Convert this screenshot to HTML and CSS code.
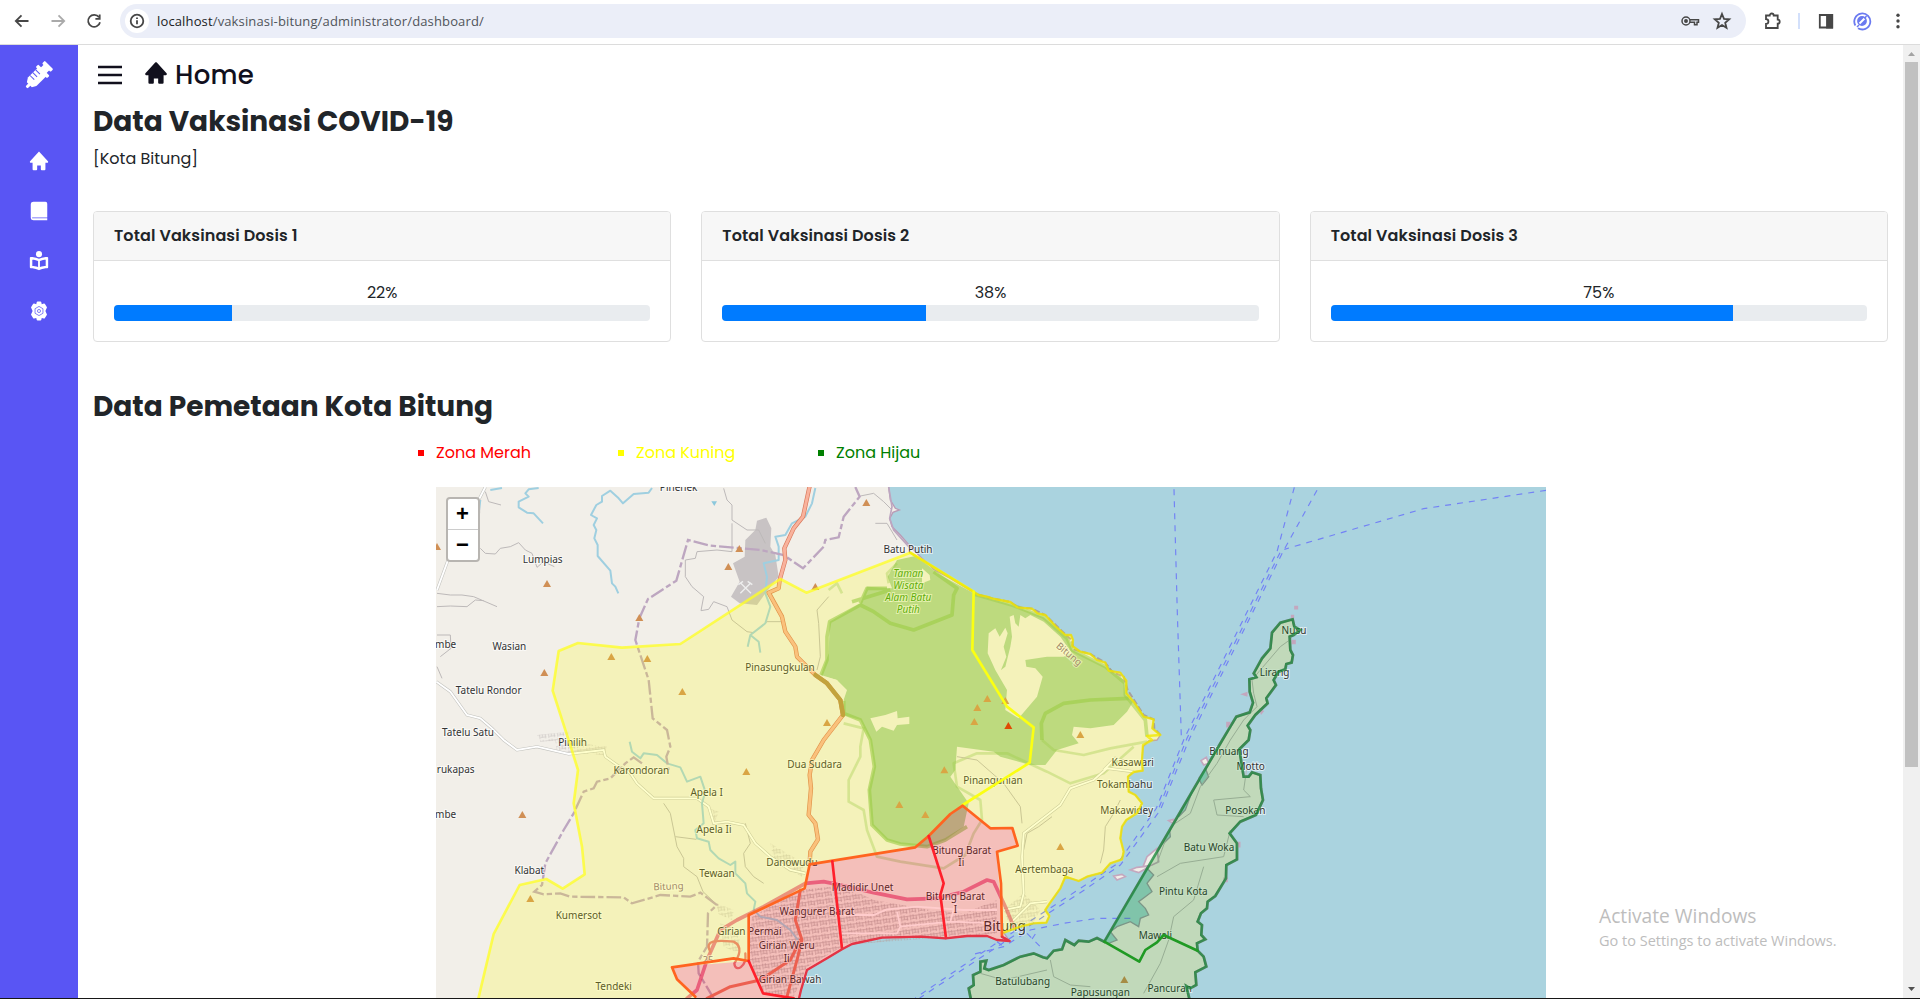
FILE: index.html
```html
<!DOCTYPE html>
<html lang="id">
<head>
<meta charset="utf-8">
<title>Dashboard Vaksinasi Bitung</title>
<link rel="stylesheet" href="styles.css">
</head>
<body>
<header class="toolbar">
  <nav class="nav-buttons">
    <svg width="20" height="20" viewBox="0 0 20 20" class="line"><path d="M16.5 10H4M9.5 4.3 3.8 10l5.7 5.7"/></svg>
    <svg width="20" height="20" viewBox="0 0 20 20" class="line faded"><path d="M3.500 10H16M10.500 4.300 16.200 10l-5.700 5.700"/></svg>
    <svg width="20" height="20" viewBox="0 0 20 20" class="line"><path d="M15 6.300A6 6 0 1 0 16 11.200M15.700 3.500v4.300h-4.300"/></svg>
  </nav>
  <div class="address">
    <span class="site-info"><svg width="16" height="16" viewBox="0 0 16 16" class="line"><circle cx="8" cy="8" r="6.300"/><path d="M8 7.200v4M8 4.500v1.500"/></svg></span>
    <span class="url"><b>localhost</b>/vaksinasi-bitung/administrator/dashboard/</span>
    <svg width="20" height="20" viewBox="0 0 20 20" class="line key"><circle cx="6" cy="10" r="4"/><circle cx="6" cy="10" r="1.200" fill="#474747"/><path d="M10 8.800h8.500v2.400H17v2.500h-2.500v-2.500H10"/></svg>
    <svg width="20" height="20" viewBox="0 0 20 20" class="line"><path d="m10 3 2 4.900 5.200.4-4 3.400 1.300 5.100L10 14l-4.500 2.800 1.300-5.100-4-3.400 5.200-.4z"/></svg>
  </div>
  <div class="extensions">
    <svg width="20" height="20" viewBox="0 0 20 20" class="line"><path d="M4 4.500h3.700a2 2 0 0 1 4 0h4v4.200a2 2 0 0 1 0 4V17H4v-4a2.300 2.300 0 0 0 0-4.800z"/></svg>
    <span class="divider"></span>
    <svg width="20" height="20" viewBox="0 0 20 20" class="line"><path d="M3.800 4h12.400v12.500H3.800z"/><path d="M11 4h5.200v12.500H11z" fill="#474747"/></svg>
    <svg width="20" height="20" viewBox="0 0 20 20" class="line profile"><path d="M3.400 14.500A8 8 0 1 1 6 17.200"/><circle cx="10" cy="10" r="4" fill="#6b7af0"/><path d="m7.500 12.500 5-5" stroke="#fff" stroke-width="2"/><path d="m5 16 2-2M12.500 7.500l2-2.500" stroke-width="1.500"/></svg>
    <svg width="20" height="20" viewBox="0 0 20 20" fill="#474747"><circle cx="10" cy="4.300" r="1.700"/><circle cx="10" cy="10" r="1.700"/><circle cx="10" cy="15.700" r="1.700"/></svg>
  </div>
</header>

<div class="page">
  <aside class="sidebar">
    <svg class="logo" width="30" height="30" viewBox="0 0 30 30"><g transform="translate(2.500 27.500) rotate(-45)" fill="#fff"><rect x="0" y="-1.500" width="5" height="3" rx="1"/><path d="M4-3.500 8-6h14v12H8L4 3.500z"/><rect x="21" y="-8" width="3.600" height="16" rx="1"/><rect x="24" y="-4" width="6" height="8"/><rect x="28" y="-6" width="3.800" height="12" rx="1"/><path d="M11-6v6M15-6v6M19-6v6" stroke="#5955f4" stroke-width="1"/></g></svg>
    <svg width="22" height="22" viewBox="0 0 24 24"><path d="m21.743 12.331-9-10c-.379-.422-1.107-.422-1.486 0l-9 10a.998.998 0 0 0-.17 1.076c.16.361.518.593.913.593h2v7a1 1 0 0 0 1 1h3a1 1 0 0 0 1-1v-4h4v4a1 1 0 0 0 1 1h3a1 1 0 0 0 1-1v-7h2a.998.998 0 0 0 .743-1.669z"/></svg>
    <svg width="22" height="22" viewBox="0 0 24 24"><path d="M6 2h13a2 2 0 0 1 2 2v15H4.500v1H21v2H6c-1.500 0-3-.8-3-3V5c0-2.200 1.500-3 3-3z"/></svg>
    <svg width="22" height="22" viewBox="0 0 24 24"><path fill-rule="evenodd" d="M21 7.500c-.202 0-4.850.029-9 2.008C7.850 7.529 3.202 7.500 3 7.500a1 1 0 0 0-1 1v10.383a1 1 0 0 0 1 1c.683 0 4.400.098 8.600 2.025a1 1 0 0 0 .8 0c4.200-1.927 7.900-2.025 8.600-2.025a1 1 0 0 0 1-1V8.500a1 1 0 0 0-1-1zM4.700 10.500c1.485.111 4.200.48 6.300 1.500v6.600c-2.500-.9-4.900-1.100-6.300-1.200zm14.600 6.900c-1.410.1-3.800.3-6.300 1.200V12c2.100-1.020 4.800-1.390 6.300-1.500z"/><circle cx="12" cy="4.500" r="3.300"/></svg>
    <svg width="22" height="22" viewBox="0 0 24 24"><path d="M9.500 2.500a1 1 0 0 1 1-.9h3a1 1 0 0 1 1 .9l.5 2 2.300-.6a1 1 0 0 1 1.200.5l2 3.200a1 1 0 0 1-.2 1.300L19 12l1.300 3.100a1 1 0 0 1 .2 1.300l-2 3.200a1 1 0 0 1-1.200.5l-2.300-.6-.5 2a1 1 0 0 1-1 .9h-3a1 1 0 0 1-1-.9l-.5-2-2.300.6a1 1 0 0 1-1.200-.5l-2-3.200a1 1 0 0 1 .2-1.300L5 12 3.700 8.900a1 1 0 0 1-.2-1.300l2-3.200a1 1 0 0 1 1.200-.5l2.300.6z"/><path d="m12 7 4.300 2.500v5L12 17l-4.300-2.500v-5z" fill="none" stroke="#5955f4" stroke-width=".8"/><circle cx="12" cy="12" r="1.700" fill="none" stroke="#5955f4" stroke-width=".8"/></svg>
  </aside>

  <main class="content">
    <div class="page-head">
      <svg width="24" height="20" viewBox="0 0 24 20"><path d="M0 2h24M0 10h24M0 18h24" stroke="#11101d" stroke-width="2.500"/></svg>
      <svg class="home-icon" width="26" height="26" viewBox="0 0 24 24" fill="#11101d"><path d="m21.743 12.331-9-10c-.379-.422-1.107-.422-1.486 0l-9 10a.998.998 0 0 0-.17 1.076c.16.361.518.593.913.593h2v7a1 1 0 0 0 1 1h3a1 1 0 0 0 1-1v-4h4v4a1 1 0 0 0 1 1h3a1 1 0 0 0 1-1v-7h2a.998.998 0 0 0 .743-1.669z"/></svg>
      <span class="page-title">Home</span>
    </div>
    <h1 class="section-title">Data Vaksinasi COVID-19</h1>
    <p class="subtitle">[Kota Bitung]</p>

    <section class="cards">
      <article class="card"><h2 class="card-header">Total Vaksinasi Dosis 1</h2><div class="card-body"><span>22%</span><div class="progress"><div class="bar" style="width:22%"></div></div></div></article>
      <article class="card"><h2 class="card-header">Total Vaksinasi Dosis 2</h2><div class="card-body"><span>38%</span><div class="progress"><div class="bar" style="width:38%"></div></div></div></article>
      <article class="card"><h2 class="card-header">Total Vaksinasi Dosis 3</h2><div class="card-body"><span>75%</span><div class="progress"><div class="bar" style="width:75%"></div></div></div></article>
    </section>

    <h1 class="section-title map-title">Data Pemetaan Kota Bitung</h1>
    <ul class="legend">
      <li class="red">Zona Merah</li>
      <li class="yellow">Zona Kuning</li>
      <li class="green">Zona Hijau</li>
    </ul>

    <div class="map">
      <svg class="map-canvas" width="1110" height="511" viewBox="17 21 3330 1533">
        <defs>
          <path id="peak" d="M-12 10 0-11 12 10z"/>
          <path id="mainland" d="M0 0H1375V21L1380 60 1395 85 1407 90 1388 97 1378 115 1385 140 1410 165 1445 205 1475 235 1510 268 1560 295 1630 338 1645 345 1670 350 1685 355 1740 366 1762 382 1805 386 1822 400 1845 405 1875 438 1905 465 1922 465 1928 480 1926 498 1950 515 1980 522 2000 540 2025 548 2035 572 2070 578 2088 602 2088 640 2110 665 2140 710 2170 718 2166 745 2190 765 2180 780 2155 783 2138 800 2135 840 2137 872 2110 876 2093 890 2095 935 2115 945 2135 970 2120 1000 2088 1020 2075 1040 2070 1075 2080 1115 2075 1138 2040 1150 2015 1178 1970 1190 1945 1203 1905 1190 1890 1225 1858 1270 1845 1290 1857 1308 1848 1328 1810 1330 1770 1340 1720 1358 1738 1383 1700 1380 1670 1368 1610 1368 1545 1375 1470 1370 1355 1373 1265 1392 1235 1408 1190 1435 1130 1470 1112 1530 1105 1560H0z"/>
          <path id="island" d="M2587 418 2550 428 2525 458 2520 505 2495 535 2470 580 2478 592 2457 598 2458 635 2468 668 2458 697 2418 710 2395 748 2376 780 2022 1385 2000 1374 1975 1385 1945 1382 1932 1395 1905 1380 1895 1408 1870 1412 1850 1435 1838 1432 1810 1420 1770 1430 1720 1455 1675 1470 1662 1465 1668 1442 1650 1445 1650 1475 1628 1485 1630 1515 1615 1525 1622 1560H2278L2268 1518 2280 1525 2298 1515 2295 1477 2328 1460 2320 1430 2302 1412 2300 1390 2325 1378 2313 1365 2315 1335 2302 1325 2312 1300 2330 1285 2332 1265 2355 1248 2387 1195 2388 1155 2420 1138 2420 1090 2398 1060 2430 1025 2477 1005 2498 960 2492 925 2490 885 2465 877 2455 890 2440 890 2427 808 2455 780 2460 750 2452 737 2475 705 2512 670 2508 655 2537 615 2530 600 2545 575 2565 568 2568 552 2584 548 2588 525 2580 510 2578 470 2590 465 2610 450 2592 440z"/>
          <pattern id="streets" width="27" height="21" patternUnits="userSpaceOnUse" patternTransform="rotate(-8)"><path d="M2 0v18M10 0v14M19 4v14M0 5h27M4 13h18" fill="none" stroke="#b0abab" stroke-width="2"/></pattern>
        </defs>

        <rect width="3400" height="1600" fill="#aad3df"/>
        <use href="#mainland" fill="#f2efe9" stroke="#b99bb5" stroke-width="4"/>
        <use href="#island" fill="#f2efe9" stroke="#b99bb5" stroke-width="8"/>
        <g fill="#f2efe9" stroke="#c4a7be" stroke-width="5">
          <path d="M2185 1145 2180 1105 2150 1130 2138 1160 2165 1155zM2120 1162 2100 1170 2125 1178 2160 1158zM2050 1188 2075 1183 2085 1190 2060 1200zM2312 842 2328 832 2335 850 2320 855zM2215 1022 2230 1018 2228 1030z"/>
          <path d="M2594 380h7v6h-7zM2584 407h5v6h-5zM2437 643l12-4v8zM2490 690l8 4-5 6zM2390 728h8v12h-8zM2586 482h8v8h-8zM2420 1088h8v12h-8zM2382 1195h8v9h-8z" fill="#c0a5bb"/>
        </g>
        <!-- tidal inlets behind the island's boundary line -->
        <path d="M2150 1165 2170 1185 2150 1210 2165 1235 2145 1250 2125 1265 2145 1285 2155 1305 2130 1315 2125 1340 2100 1325 2060 1340 2040 1355 2060 1380 2035 1390 2022 1385zM2285 935 2245 1010 2265 990zM2325 865 2335 890 2315 915 2305 895zM2218 1050 2200 1090 2220 1070z" fill="#a0d5d5" stroke="#9a9ba9" stroke-width="4"/>

        <!-- forest and reserve outlines -->
        <path d="M1455 228 1475 240 1520 280 1630 340 1745 375 1840 412 1910 470 1926 510 2025 560 2080 600 2085 645 2108 665 2090 695 2050 735 1980 745 1930 740 1925 765 1945 790 1880 810 1845 855 1800 855 1710 830 1690 815 1580 800 1575 870 1560 890 1615 970 1600 1040 1545 1080 1490 1100 1410 1092 1370 1080 1325 1035 1315 930 1332 860 1320 780 1290 720 1240 705 1242 662 1220 600 1172 585 1195 520 1198 425 1290 370 1310 320 1385 325 1372 290 1400 240z" fill="#add19e"/>
        <path d="M1675 460 1695 445 1708 470 1725 443 1732 460 1720 500 1728 530 1712 570 1725 560 1740 500 1745 470 1738 410 1750 405 1755 430 1765 440 1770 405 1785 415 1800 405 1840 425 1890 470 1925 520 1900 530 1850 530 1785 540 1788 560 1815 565 1837 590 1820 650 1765 715 1725 690 1730 630 1695 570 1672 520zM1320 715 1365 705 1400 693 1402 715 1437 710 1437 732 1400 735 1390 752 1355 740 1338 755zM1184 590 1220 600 1250 630 1240 660zM1475 265 1498 285 1500 300 1475 310z" fill="#f2efe9"/>
        <g fill="none" stroke="#83bf55" stroke-width="11" stroke-opacity=".6" stroke-linejoin="round">
          <path d="M1172 585 1190 540 1190 470 1198 425 1290 375 1330 395 1380 430 1450 450 1565 405 1570 345 1580 325 1510 275M1290 370 1310 325 1370 325M1265 365 1380 330M1240 662 1240 700 1290 720 1320 780 1332 860 1317 930 1325 1035 1370 1080 1410 1092 1490 1100 1545 1080 1610 1040M1835 780 1833 730 1845 700 1900 670 1980 660 2095 655"/>
          <path d="M1240 730 1300 745 1290 800 1290 830 1255 900 1255 965 1300 990 1310 1050 1340 1130 1410 1145 1540 1165 1605 1125 1630 1060 1655 1020 1650 960 1580 920 1570 850 1640 820 1730 820 1850 875 1920 910 2020 880 2110 800M1835 780 1870 810 1960 825 2040 805 2150 785M1400 250 1370 280 1375 310M1195 330 1220 310 1235 340" stroke-width="8" stroke-opacity=".35"/>
          <path d="M1630 342 1745 375 1840 412 1910 475 1926 510 2025 560 2085 610 2085 645 2145 720 2150 770" stroke-opacity=".5"/>
        </g>

        <!-- quarry and built-up areas -->
        <path d="M980 122 1008 113 1023 145 1020 200 1035 225 1045 290 1005 340 980 375 928 370 902 350 928 305 908 250 943 230 945 180 975 150z" fill="#c8c3c4"/>
        <path d="m930 340 32-32m-32 0 32 32m-38-26 14-10m14 0 14 10" stroke="#eee" stroke-width="4"/>
        <g fill="url(#streets)">
          <path d="M965 1310 1110 1230 1200 1220 1235 1400 1130 1460 1090 1550 1000 1540 955 1440zM1200 1200 1330 1260 1500 1290 1600 1300 1700 1260 1700 1360 1240 1395z"/>
          <path d="M1720 1290 1780 1240 1830 1290 1810 1325 1740 1340zM860 1270 910 1290 905 1320 860 1300zM1020 1090 1120 1150 1115 1190 1030 1140zM835 985 865 995 850 1035zM870 1330 930 1350 925 1420 880 1400zM320 765 415 755 410 780 330 785zM375 780 530 800 520 825 380 815z" opacity=".6"/>
        </g>

        <!-- minor roads -->
        <g fill="none" stroke="#bdb9b9" stroke-width="3" stroke-linejoin="round">
          <path d="M150 205 165 220 195 222 210 205 240 200 265 188 285 210 305 220 320 262 340 245 372 260M165 35 175 65 212 75M20 340 60 345 95 345 130 350 200 380M20 380 60 378 110 380 135 360 160 362M20 465 60 465 62 505 30 530M20 560 35 595"/>
          <path d="M905 215 860 210 800 215 795 235 765 240 765 290 785 320 820 350 812 392 835 388 850 365 890 380 905 420 950 455 970 458 1010 425 1060 425M880 25 890 60 905 75 905 120 950 150 985 150 1005 190M905 130 905 215M1290 48 1330 40 1360 65 1385 90M1335 130 1370 130 1400 180M1195 350 1160 390 1165 430 1170 530 1160 570"/>
          <path d="M700 970 720 1000 740 1100 760 1135 760 1160 800 1190 818 1235 850 1265M735 1070 798 1078M945 1030 960 1090 940 1120 945 1160 970 1190 1000 1210M1580 830 1640 840 1720 910 1770 980 1775 1030M1865 1010 1825 1040 1790 1060 1780 1110M2070 960 2050 1000 2025 1040 2020 1110 2010 1150"/>
          <path d="M2585 475 2550 500 2490 570 2465 600 2470 640 2480 680 2440 720 2400 780 2360 850 2310 920 2280 1000 2220 1040 2180 1150M2450 860 2440 930 2460 950 2350 960 2360 1005 2440 1010M2400 1050 2380 1130 2250 1150 2180 1190M2320 1160 2290 1260 2230 1310 2215 1380 2190 1450 2140 1540M1860 1440 1870 1490 1920 1515 1980 1520M1650 1480 1720 1500 1850 1470"/>
        </g>
        <path d="M165 21 145 60 145 100M55 235 20 330M18 605 60 635 110 705 150 715 185 745 220 780 260 810 320 800 415 822 520 810 525 830 560 855 600 880 620 910 670 955 800 955 835 980 850 1030 890 1025 940 1035 975 1090 1020 1130 1080 1170 1125 1180M2110 875 2030 865 1990 900 1920 925 1890 975 1780 1060 1775 1130 1780 1240 1770 1280 1720 1290M2020 870 2055 835 2100 850M1730 1340 1800 1270 1850 1265" fill="none" stroke="#c3c3bf" stroke-width="9"/>
        <path d="M165 21 145 60 145 100M55 235 20 330M18 605 60 635 110 705 150 715 185 745 220 780 260 810 320 800 415 822 520 810 525 830 560 855 600 880 620 910 670 955 800 955 835 980 850 1030 890 1025 940 1035 975 1090 1020 1130 1080 1170 1125 1180M2110 875 2030 865 1990 900 1920 925 1890 975 1780 1060 1775 1130 1780 1240 1770 1280 1720 1290M2020 870 2055 835 2100 850M1730 1340 1800 1270 1850 1265M1240 1305 1330 1305 1370 1288 1460 1280 1600 1290 1700 1290M1230 1360 1400 1360 1410 1340 1560 1325 1700 1330M1560 1325 1580 1250M1400 1295 1410 1340" fill="none" stroke="#fff" stroke-width="5.500"/>

        <!-- rivers -->
        <g fill="none" stroke="#9fcfe0" stroke-width="6" stroke-linejoin="round">
          <path d="M325 24 295 28 285 40 295 50 265 65 265 82 290 98 310 100 338 130M665 24 655 38 610 42 578 70 565 55 540 32 515 48 515 65 498 75 482 105 500 115 490 135 498 150 492 175 502 195 502 228 540 272 545 310 555 320 564 340M1155 24 1145 70 1125 110 1085 130 1065 165 1035 170 1045 200 1045 240 1000 250 1010 290 1005 340 1020 380 1005 430 960 465 952 500M960 465 985 485 990 518M150 60 145 100 145 170M215 24 180 30"/>
          <path d="M598 785 605 815 630 835 640 820 680 825 710 850 750 862 770 905 810 890 825 935 815 970 820 1030 795 1050 800 1075 835 1085 840 1110 865 1135 900 1155 915 1145 915 1180 945 1210 950 1240 975 1265 970 1290 990 1310 1040 1320 1080 1350 1110 1390"/>
        </g>
        <path d="M843 64h17l-8 14z" fill="#8cc8dc"/>

        <!-- regency boundaries -->
        <g fill="none" stroke="#bda6c0" stroke-width="7" stroke-dasharray="44 9 16 9">
          <path d="M1275 21 1288 50 1240 110 1225 172 1185 180 1180 200 1118 265 1060 225 990 210 840 197 773 180 738 302 653 357 627 415 615 480 655 600 667 715 710 750 720 800 708 830 715 870M635 850 610 832 585 850 540 895 500 905 490 925 460 935 430 1000 400 1050 345 1150 335 1215 312 1235 340 1243 390 1240 420 1250 580 1252 605 1270 690 1245 780 1250 810 1238 860 1275 833 1300 830 1400 803 1445 805 1480 850 1555"/>
          <path d="M1375 21 1385 80 1378 115 1390 150 1440 205" stroke-dasharray="none" stroke-width="5"/>
        </g>
        <g fill="none" stroke="#a58f87" stroke-width="6" stroke-opacity=".75"><path d="M1645 345 1685 355 1740 366 1762 382 1805 386 1845 405 1905 463 1924 480 1930 508 1980 522 2025 548 2045 575 2080 590 2092 630 2140 705 2170 718 2172 745 2190 765" stroke-dasharray="18 7"/></g>

        <!-- main roads -->
        <g fill="none" stroke-linejoin="round" stroke-linecap="round">
          <path d="M1138 18 1118 110 1090 145 1062 205 1065 240 1048 300 1045 325 1015 338 1055 410 1065 455 1095 500 1100 530 1155 585 1190 610 1230 660 1238 705 1180 780 1145 840 1138 885 1142 925 1135 1005 1155 1030 1163 1078 1140 1115 1138 1150" stroke="#d9795c" stroke-width="13"/>
          <path d="M1138 18 1118 110 1090 145 1062 205 1065 240 1048 300 1045 325 1015 338 1055 410 1065 455 1095 500 1100 530 1155 585 1190 610 1230 660 1238 705 1180 780 1145 840 1138 885 1142 925 1135 1005 1155 1030 1163 1078 1140 1115 1138 1150" stroke="#f9b29c" stroke-width="9"/>
          <path d="M1155 585 1190 610 1230 660 1238 705" stroke="#b38c4c" stroke-width="13"/>
          <path d="M770 1555 800 1530 830 1440 870 1350 920 1320 1000 1280 1125 1210 1180 1205 1230 1215 1330 1238 1430 1258 1520 1255 1600 1235 1670 1200 1690 1205 1725 1280 1750 1340" stroke="#dc2a67" stroke-width="11" stroke-opacity=".6"/>
          <path d="M840 1415C820 1380 860 1380 910 1385 940 1400 925 1430 912 1450 915 1480 950 1460 945 1420" stroke="#e5757b" stroke-width="7"/>
          <path d="M1110 1230 1095 1320 1115 1380 1100 1440 1070 1550M830 1555 900 1520 990 1500 1080 1440 1110 1380" stroke="#e87965" stroke-width="9"/>
        </g>

        <!-- ferry routes -->
        <g fill="none" stroke="#7382f5" stroke-width="3.500" stroke-dasharray="18 18">
          <path d="M2231 28 2241 400 2253 770M3347 31 2980 86 2562 208M2592 22 2540 215 2262 775 2178 985 2062 1150 1955 1222 1700 1388 1455 1554M2660 31 2558 215 2278 775 2190 990 2070 1155 1965 1228 1710 1394 1468 1554"/>
          <path d="M2549 218 2270 775 2184 988"/>
          <path d="M2100 1315 2000 1315 1900 1330 1800 1350 1720 1400 1620 1425M1790 1360 1840 1410M1815 1362 1800 1385M1700 1385 1720 1400"/>
        </g>

        <g class="labels">
          <text x="745" y="32">Pinenek</text><text x="337" y="248">Lumpias</text><text x="237" y="510">Wasian</text><text x="46" y="504">mbe</text><text x="175" y="642">Tatelu Rondor</text><text x="113" y="769">Tatelu Satu</text><text x="427" y="798">Pinilih</text><text x="76" y="880">rukapas</text><text x="46" y="1014">mbe</text><text x="1049" y="572">Pinasungkulan</text><text x="1433" y="218">Batu Putih</text>
          <text x="633" y="883">Karondoran</text><text x="829" y="949">Apela I</text><text x="851" y="1058">Apela Ii</text><text x="1153" y="865">Dua Sudara</text><text x="297" y="1181">Klabat</text><text x="860" y="1192">Tewaan</text><text x="1085" y="1158">Danowudu</text><text x="445" y="1318">Kumersot</text><text x="957" y="1364">Girian Permai</text><text x="1069" y="1408">Girian Weru</text><text x="1069" y="1446">Ii</text><text x="1079" y="1509">Girian Bawah</text><text x="550" y="1529">Tendeki</text><text x="1160" y="1304">Wangurer Barat</text><text x="1297" y="1234">Madidir Unet</text><text x="1594" y="1121">Bitung Barat</text><text x="1593" y="1159">Ii</text><text x="1575" y="1260">Bitung Barat</text><text x="1575" y="1298">I</text><text x="1723" y="1354" class="city">Bitung</text><text x="1842" y="1180">Aertembaga</text><text x="1688" y="912">Pinangunian</text><text x="2107" y="857">Kasawari</text><text x="2083" y="923">Tokambahu</text><text x="2089" y="1002">Makawidey</text>
          <text x="2591" y="463">Nusu</text><text x="2533" y="588">Lirang</text><text x="2396" y="825">Binuang</text><text x="2461" y="869">Motto</text><text x="2445" y="1002">Posokan</text><text x="2336" y="1114">Batu Woka</text><text x="2259" y="1246">Pintu Kota</text><text x="2175" y="1378">Mawali</text><text x="2218" y="1535">Pancuran</text><text x="2010" y="1547">Papusungan</text><text x="1777" y="1516">Batulubang</text>
          <g class="park"><text x="1434" y="291">Taman</text><text x="1434" y="327">Wisata</text><text x="1434" y="363">Alam Batu</text><text x="1434" y="399">Putih</text></g>
          <g class="district"><text x="715" y="1229" transform="rotate(-2 715 1229)">Bitung</text><text transform="translate(1910 530) rotate(40)">Bitung</text><text x="833" y="1450">25</text></g>
        </g>
        <g fill="#d08f55"><use href="#peak" x="20" y="200"/><use href="#peak" x="350" y="311"/><use href="#peak" x="894" y="260"/><use href="#peak" x="927" y="206"/><use href="#peak" x="627" y="413"/><use href="#peak" x="342" y="578"/><use href="#peak" x="276" y="1004"/><use href="#peak" x="1308" y="68"/><use href="#peak" x="1155" y="320"/><use href="#peak" x="543" y="530"/><use href="#peak" x="651" y="536"/><use href="#peak" x="756" y="635"/><use href="#peak" x="948" y="875"/><use href="#peak" x="300" y="1256"/><use href="#peak" x="1190" y="728"/><use href="#peak" x="1671" y="656"/><use href="#peak" x="1725" y="662"/><use href="#peak" x="1641" y="683"/><use href="#peak" x="1632" y="725"/><use href="#peak" x="1950" y="764"/><use href="#peak" x="1542" y="870"/><use href="#peak" x="1407" y="974"/><use href="#peak" x="1485" y="1004"/><use href="#peak" x="1890" y="1100"/><use href="#peak" x="2082" y="1499"/></g>
        <use href="#peak" x="1734" y="737" fill="#d81e05"/>

        <!-- zone overlays -->
        <path fill="#ff0" fill-opacity=".2" d="M1050 297 750 492 575 503 443 489 385 513 367 632 418 790 443 870 430 970 455 1100 463 1183 397 1226 348 1197 268 1215 190 1362 143 1560H800L740 1498 725 1462 955 1443V1305L1123 1225 1138 1153 1455 1102 1495 1068 1560 1002 1597 977 1680 1045 1746 1044 1762 1097 1700 1115 1715 1358 1770 1340 1810 1330 1848 1328 1857 1308 1845 1290 1858 1270 1890 1225 1905 1190 1945 1203 1970 1190 2015 1178 2040 1150 2075 1138 2080 1115 2070 1075 2075 1040 2088 1020 2120 1000 2135 970 2115 945 2095 935 2093 890 2110 876 2137 872 2135 840 2138 800 2180 780 2190 765 2166 745 2170 718 2140 710 2110 665 2088 640 2088 602 2070 578 2035 572 2025 548 2000 540 1980 522 1950 515 1926 498 1928 480 1922 465 1905 465 1875 438 1845 405 1822 400 1805 386 1762 382 1740 366 1685 355 1645 345 1630 335 1440 218 1128 338z"/>
        <path fill="red" fill-opacity=".2" d="M800 1560 740 1498 725 1462 955 1443V1305L1123 1225 1138 1153 1455 1102 1495 1068 1560 1002 1597 977 1680 1045 1746 1044 1762 1097 1700 1115 1715 1358 1738 1383 1700 1380 1670 1368 1545 1375 1470 1370 1355 1373 1265 1392 1235 1408 1130 1470 1105 1560z"/>
        <use href="#island" fill="green" fill-opacity=".2" stroke="#138535" stroke-opacity=".75" stroke-width="8"/>
        <g fill="none" stroke-width="8" stroke-linejoin="round" stroke-linecap="round">
          <path stroke="#ffff20" stroke-opacity=".75" d="M143 1560 190 1362 268 1215 348 1197 397 1226 463 1183 455 1100 430 970 443 870 418 790 367 632 385 513 443 489 575 503 750 492 1050 297 1128 338 1440 218 1630 335"/>
          <path stroke="#f1e800" stroke-opacity=".8" stroke-width="7" d="M1440 218 1630 335 1645 345 1670 350 1685 355 1740 366 1762 382 1805 386 1822 400 1845 405 1875 438 1905 465 1922 465 1928 480 1926 498 1950 515 1980 522 2000 540 2025 548 2035 572 2070 578 2088 602 2088 640 2110 665 2140 710 2170 718 2166 745 2190 765 2150 768 2165 780 2138 795 2135 840 2137 872 2110 876 2093 890 2095 935 2115 945 2135 970 2120 1000 2088 1020 2075 1040 2070 1075 2080 1115 2075 1138 2040 1150 2015 1178 1970 1190 1945 1203 1905 1190 1890 1225 1858 1270 1845 1290 1857 1308 1848 1328 1810 1330 1770 1340 1720 1358"/>
          <path stroke="#fbff12" d="M1630 335 1626 510 1730 680 1810 742 1798 848 1597 975"/>
          <path stroke="#ff6420" d="M795 1550 740 1498 725 1462 910 1435 955 1443V1305L1123 1225 1138 1153 1455 1102 1495 1068 1560 1002 1597 977 1680 1045 1746 1044 1762 1097 1700 1115 1712 1210 1715 1370"/>
          <path stroke="#ff202c" d="M1206 1144 1235 1405M1495 1068 1540 1210 1530 1245 1547 1374M955 1443 998 1540 1090 1555"/>
          <path stroke="#e43445" stroke-width="7" d="M1715 1370 1738 1383 1700 1380 1670 1368 1610 1368 1545 1375 1470 1370 1355 1373 1265 1392 1235 1408 1190 1435 1130 1470 1112 1530 1105 1560"/>
          <path stroke="#209a24" d="M2022 1385 2127 1445 2145 1410 2180 1387 2200 1365 2302 1412"/>
        </g>
      </svg>
      <div class="zoom-control"><span>+</span><span>−</span></div>
    </div>

    <div class="watermark"><strong>Activate Windows</strong><span>Go to Settings to activate Windows.</span></div>
  </main>

  <div class="scrollbar">
    <svg width="17" height="17" viewBox="0 0 17 17"><path d="M5 11h7L8.500 7z" fill="#a3a3a3"/></svg>
    <span class="thumb"></span>
    <svg class="down" width="17" height="17" viewBox="0 0 17 17"><path d="M5 6h7l-3.500 4z" fill="#505050"/></svg>
  </div>
</div>
<footer class="screen-edge"></footer>
</body>
</html>
```

FILE: styles.css
```css
* { box-sizing: border-box; }
body {
  margin: 0;
  height: 999px;
  overflow: hidden;
  display: flex;
  flex-direction: column;
  background: #fff;
  color: #212529;
  font: 16px/24px "Poppins", "Inter", sans-serif;
}
svg { display: block; flex: none; }
h1, h2, p, ul { margin: 0; padding: 0; }

/* Browser toolbar */
.toolbar {
  height: 45px;
  flex: none;
  display: flex;
  align-items: flex-start;
  border-bottom: 1px solid #dcdcdc;
}
.line { fill: none; stroke: #474747; stroke-width: 1.8; }
.faded { stroke: #aaa; }
.profile { stroke: #6b7af0; }
.key { stroke-width: 1.5; }
.nav-buttons { width: 120px; padding: 11px 0 0 12px; display: flex; gap: 16px; }
.address {
  width: 1626px;
  height: 34px;
  margin-top: 4px;
  padding: 0 14px 0 5px;
  display: flex;
  align-items: center;
  gap: 12px;
  border-radius: 17px;
  background: #ebeef8;
}
.site-info {
  width: 24px;
  height: 24px;
  display: grid;
  place-items: center;
  border-radius: 50%;
  background: #fff;
}
.url {
  flex: 1;
  margin-left: -4px;
  color: #50545a;
  font: 13px/20px "Segoe UI", "Open Sans", sans-serif;
  letter-spacing: .14px;
}
.url b { color: #202124; font-weight: 400; }
.extensions { padding: 11px 0 0 16px; display: flex; gap: 16px; }
.divider { width: 2px; height: 16px; margin: 2px 0 0 0; background: #d3e0fb; }

/* Application shell */
.page { flex: 1; min-height: 0; display: flex; overflow: hidden; }
.sidebar {
  width: 78px;
  flex: none;
  padding-top: 15px;
  display: flex;
  flex-direction: column;
  align-items: center;
  gap: 28px;
  background: #5955f4;
  fill: #fff;
}
.logo { margin-bottom: 32px; }
.content { flex: 1; min-width: 0; padding: 0 15px; position: relative; }
.page-head { height: 60px; padding-left: 5px; display: flex; align-items: center; }
.home-icon { margin: -5px 0 0 21px; }
.page-title {
  margin-left: 6px;
  color: #11101d;
  font-size: 26px;
  font-weight: 500;
  letter-spacing: .3px;
}
.section-title { font-size: 28px; font-weight: 700; line-height: 34px; }
.subtitle { margin-top: 8px; line-height: 24px; }
.cards {
  margin-top: 40px;
  display: grid;
  grid-template-columns: repeat(3, 1fr);
  gap: 30px;
}
.card { height: 131px; border: 1px solid #dfdfdf; border-radius: 4px; overflow: hidden; }
.card-header {
  height: 49px;
  padding: 12px 20px;
  border-bottom: 1px solid #dfdfdf;
  background: #f7f7f7;
  font-size: 16px;
  font-weight: 600;
  line-height: 24px;
  letter-spacing: .11px;
}
.card-body { padding: 20px; text-align: center; }
.card-body span { display: block; height: 24px; line-height: 24px; }
.progress { height: 16px; border-radius: 4px; overflow: hidden; background: #e9ecef; }
.bar { height: 100%; background: #007bff; }
.map-title { margin-top: 48px; }
.legend { margin: 16px 0 0 342px; display: flex; list-style: none; }
.legend li { width: 200px; height: 24px; line-height: 25px; }
.legend li::before {
  content: "";
  display: inline-block;
  width: 6px;
  height: 6px;
  margin: 0 12px 2px -17px;
  background: currentColor;
}
.red { color: red; }
.yellow { color: yellow; }
.green { color: green; }

/* Map */
.map { width: 1110px; height: 511px; margin: 23px auto 0; position: relative; overflow: hidden; }
.labels { font: 30px "Noto Sans", sans-serif; fill: #333; text-anchor: middle; paint-order: stroke; stroke: #fff; stroke-width: 6px; stroke-opacity: .6; }
.city { font-size: 41px; }
.park { font-style: italic; fill: #379a10; }
.district { font-size: 29px; fill: #8b6c84; }
.zoom-control {
  position: absolute;
  left: 10px;
  top: 10px;
  width: 34px;
  border: 2px solid #b8b5b1;
  border-radius: 4px;
  background: #fff;
  color: #000;
  font: bold 22px/30px "Liberation Sans", sans-serif;
  text-align: center;
}
.zoom-control span { display: block; height: 30px; }
.zoom-control span + span { height: 31px; border-top: 1px solid #ccc; line-height: 29px; }
.watermark {
  position: absolute;
  left: 1521px;
  top: 857px;
  color: #bdbdbd;
  font: 14.5px/21px "Segoe UI", "Open Sans", sans-serif;
}
.watermark strong { display: block; font-size: 19.2px; line-height: 28px; font-weight: 400; }
.watermark span { display: block; }

/* Scrollbar */
.scrollbar { width: 17px; flex: none; display: flex; flex-direction: column; background: #f0f0f0; }
.thumb { width: 13px; height: 705px; margin: 0 2px; background: #c1c1c1; }
.down { margin-top: auto; }
.screen-edge { height: 1px; flex: none; background: #171717; }
```
